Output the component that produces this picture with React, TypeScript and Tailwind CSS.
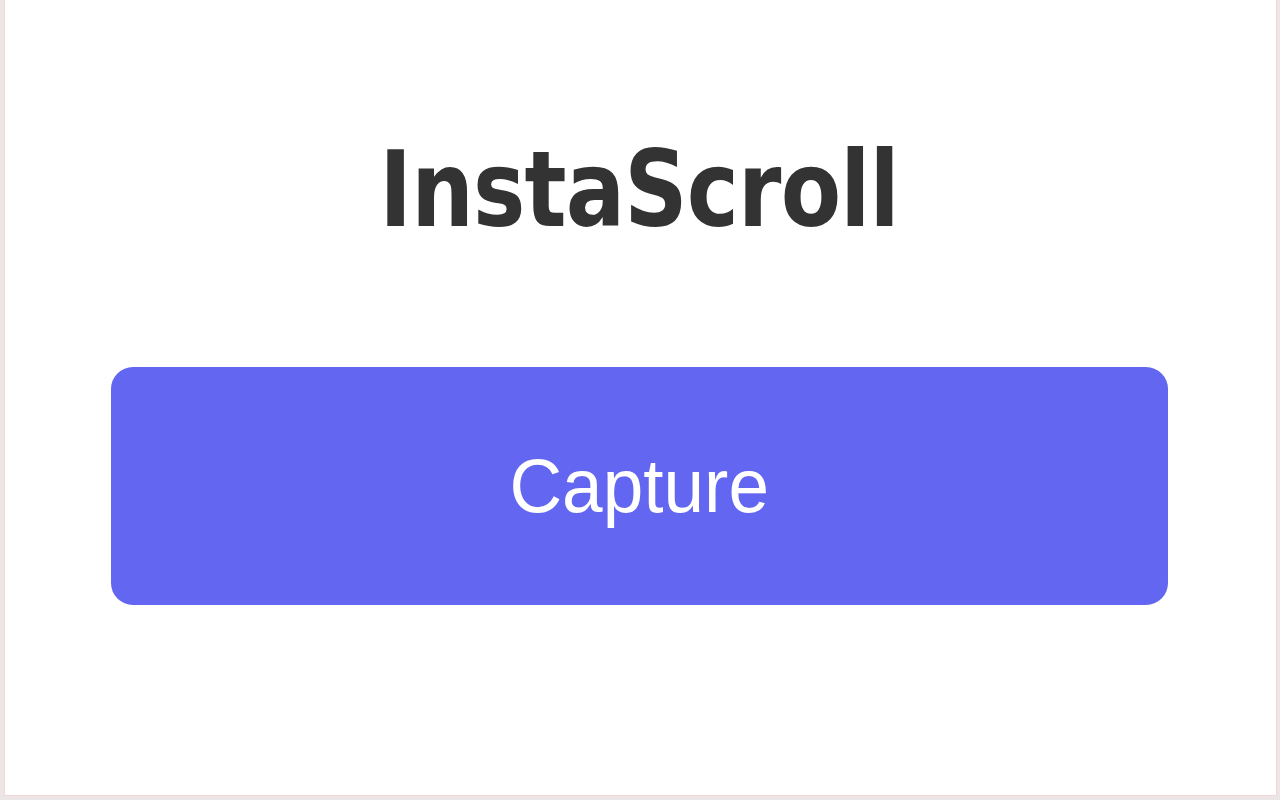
export default function App() {
  return (
    <div className="h-screen w-full bg-[#ece6e6] pl-[4px] pr-[3px] pb-[4px]">
      <div className="flex h-full flex-col items-center border-x border-b border-[#f4d6d6] bg-white pl-[106px] pr-[108px] pt-[137px]">
        <h1 className="scale-x-[0.83] font-['DejaVu_Sans',Verdana,sans-serif] text-[106px] font-bold leading-none tracking-[-1px] text-[#333333]">
          InstaScroll
        </h1>
        <button className="mt-[124px] flex h-[238px] w-full items-center justify-center rounded-[22px] bg-[#6366f1] font-['Liberation_Sans',Arial,sans-serif] text-[76px] text-white">
          <span className="scale-x-[0.96]">Capture</span>
        </button>
      </div>
    </div>
  );
}
